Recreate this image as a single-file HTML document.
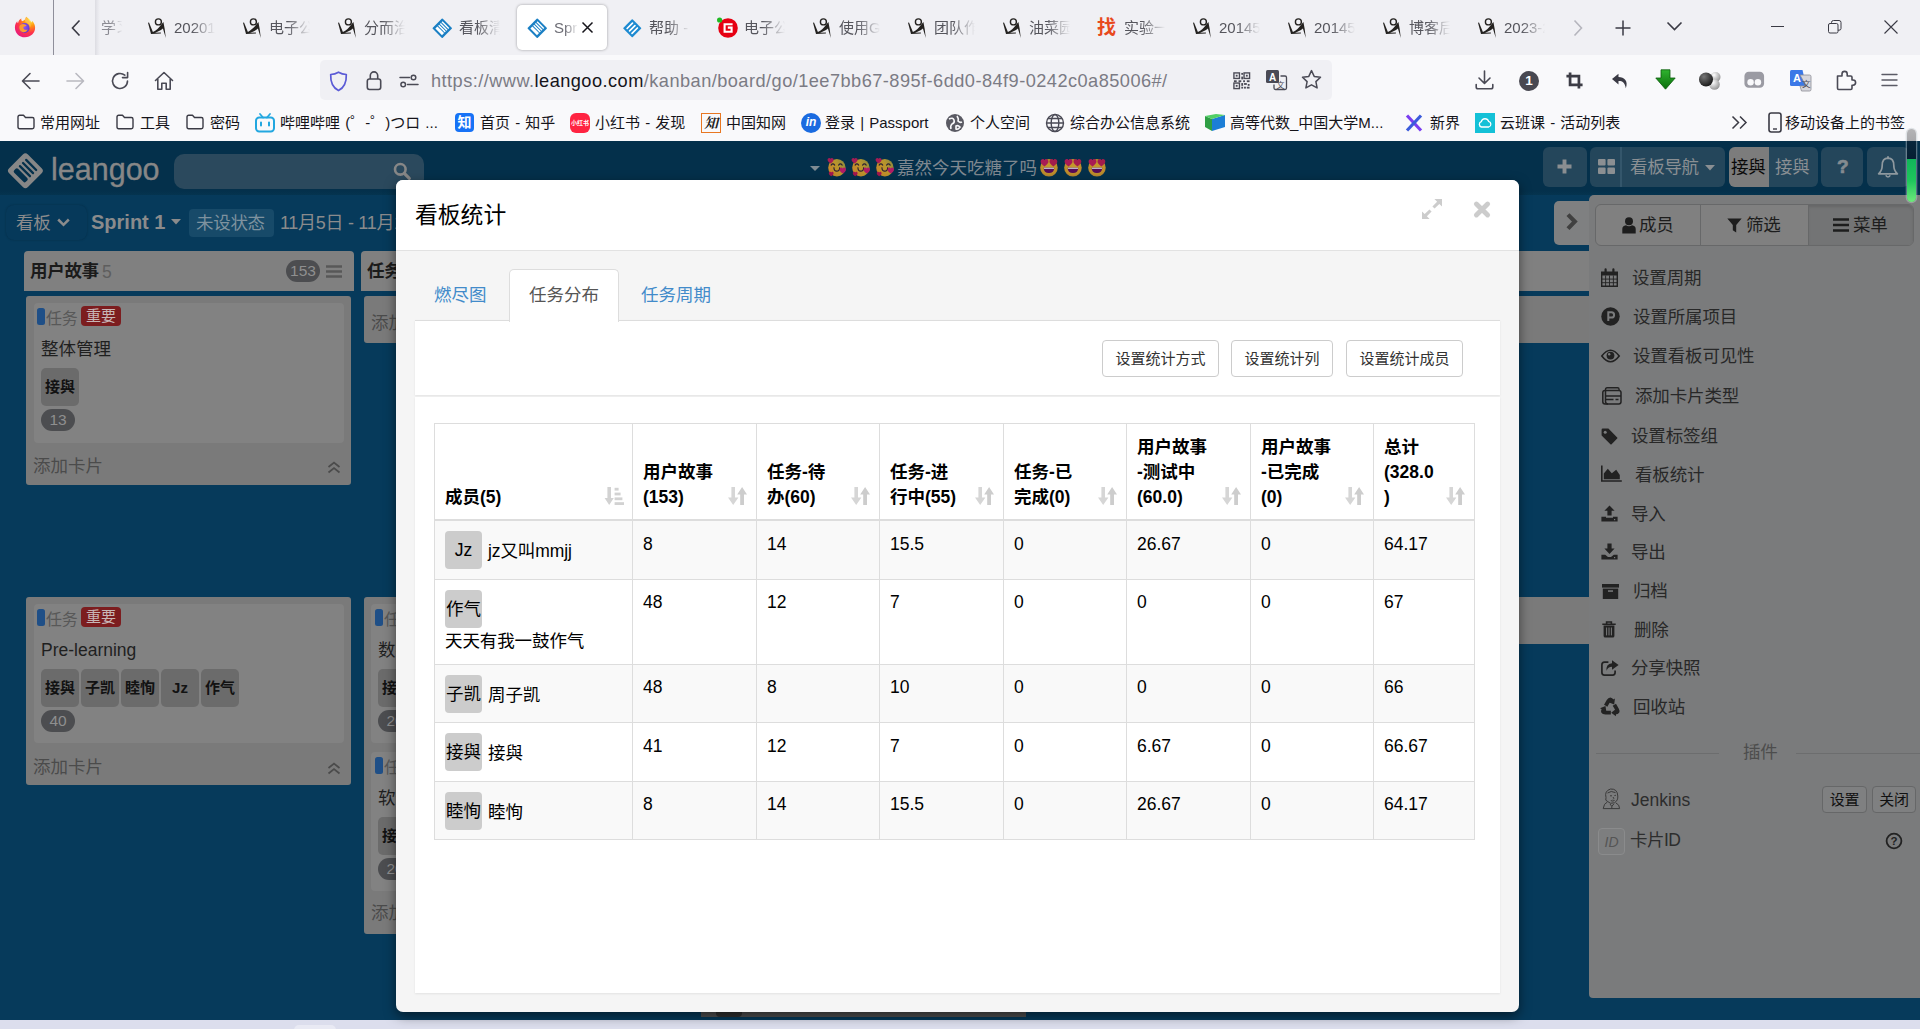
<!DOCTYPE html>
<html lang="zh-CN"><head><meta charset="utf-8"><title>Sprint 1 - Leangoo</title>
<style>
*{box-sizing:border-box}
html,body{margin:0;padding:0}
body{width:1920px;height:1029px;overflow:hidden;position:relative;background:#063a5b;
 font-family:"Liberation Sans","Noto Sans CJK SC",sans-serif;color:#333;}
.abs{position:absolute}
.t{position:absolute;white-space:nowrap;line-height:1}
svg{position:absolute;overflow:visible}
/* browser chrome */
#tabbar{position:absolute;left:0;top:0;width:1920px;height:55px;background:#f0f0f4}
#navbar{position:absolute;left:0;top:55px;width:1920px;height:50px;background:#f9f9fb}
#bmbar{position:absolute;left:0;top:105px;width:1920px;height:36px;background:#f9f9fb}
#urlbar{position:absolute;left:320px;top:60px;width:1012px;height:40px;border-radius:5px;background:#f0f0f4}
.tablabel{position:absolute;top:18px;height:20px;width:42px;overflow:hidden;white-space:nowrap;font-size:15px;line-height:20px;color:#55555c;
 -webkit-mask-image:linear-gradient(90deg,#000 0,#000 42%,transparent 98%);mask-image:linear-gradient(90deg,#000 0,#000 42%,transparent 98%)}
.bm{position:absolute;top:113px;font-size:15px;line-height:20px;height:20px;white-space:nowrap;color:#15141a;word-spacing:1px}

/* page */
#lgnav{position:absolute;left:0;top:141px;width:1920px;height:54px;background:#04304b}
#lgnav:after{content:"";position:absolute;left:0;bottom:0;width:100%;height:4px;background:linear-gradient(#04304b,#05344f)}
.navbtn{position:absolute;top:147px;height:40px;border-radius:6px;background:#24465b}
.g{color:#8a8b8c}
.list-h{position:absolute;height:40px;background:#808080;border-radius:4px 4px 0 0}
.list-b{position:absolute;background:#7a7a7a;border-radius:3px}
.card{position:absolute;background:#828282;border-radius:4px}
.av{position:absolute;width:38px;height:38px;border-radius:5px;background:#6b6b6b;color:#121212;font-size:15px;font-weight:bold;text-align:center;line-height:37px;white-space:nowrap;letter-spacing:0}
.pill{position:absolute;height:22px;border-radius:11px;background:#4c4d50;color:#8f8f8f;font-size:15.5px;line-height:22px;text-align:center}
.lbl{position:absolute;height:20px;border-radius:4px;background:#7c1d1f;color:#c8b6b6;font-size:15px;line-height:20px;text-align:center;width:40px}
.bar{position:absolute;width:8px;height:17px;border-radius:2.5px;background:#1f4f87}
.add{position:absolute;font-size:17.5px;line-height:20px;color:#4b4b4b;white-space:nowrap}
#rp{position:absolute;left:1589px;top:195px;width:331px;height:803px;background:#7a7b7c;border-radius:5px 0 0 4px}
.mi{position:absolute;left:1632px;font-size:17.5px;line-height:22px;color:#282828;white-space:nowrap;letter-spacing:-0.15px;margin-left:-1px}
/* modal */
#modal{position:absolute;left:396px;top:180px;width:1123px;height:832px;background:#f5f5f5;border-radius:7px;box-shadow:0 4px 12px rgba(0,0,0,.5)}
#mhead{position:absolute;left:0;top:0;width:1123px;height:71px;background:#fff;border-radius:7px 7px 0 0;border-bottom:1px solid #e2e2e2}
.tablink{position:absolute;top:284px;font-size:17.5px;line-height:22px;color:#428bca;white-space:nowrap;letter-spacing:0}
.btn{position:absolute;top:340px;height:37px;border:1px solid #ccc;border-radius:4px;background:#fff;font-size:15px;line-height:35px;text-align:center;color:#333;white-space:nowrap;letter-spacing:0}
table#st{position:absolute;left:434px;top:423px;border-collapse:separate;border-spacing:0;table-layout:fixed;font-size:17.5px;color:#000;border-top:1px solid #ddd;border-left:1px solid #ddd;width:1041px}
#st th,#st td{border-right:1px solid #ddd;border-bottom:1px solid #ddd;padding:0;vertical-align:top;text-align:left;position:relative}
#st th{vertical-align:bottom;font-weight:bold;line-height:25px;padding:0 0 9px 10px;border-bottom:2px solid #ddd;letter-spacing:0}
#st td{padding:10px 0 0 10px;line-height:25px}
#st tr.odd td{background:#f9f9f9}
#st tr.p1 td{padding-top:11px}
#st td.m,#st tr.p1 td.m{padding:10px 0 0 10px}
.mav{display:inline-block;width:37px;height:37.5px;border-radius:4px;background:#ccc;color:#000;text-align:center;line-height:39px;font-size:17.5px;vertical-align:top;letter-spacing:0;white-space:nowrap;overflow:hidden}
.mname{display:inline-block;line-height:39px;padding-top:1px;margin-left:2px;letter-spacing:-0.1px;vertical-align:top}
.sort{position:absolute;right:9px;bottom:14px;width:19px;height:18px}

</style></head><body>
<!-- leangoo page -->
<div id="lgnav"></div>
<svg style="left:7px;top:152px" width="37" height="37" viewBox="-18.4 -18.7 37 37"><g transform="rotate(45)"><rect x="-13.3" y="-13.3" width="26.6" height="26.6" rx="3.6" fill="#878787"/><g fill="#04304b"><rect x="-8.2" y="-9.3" width="16.4" height="2.3" rx="1.1"/><rect x="-8.2" y="-4.9" width="16.4" height="2.3" rx="1.1"/><rect x="-8.2" y="-0.5" width="16.4" height="2.3" rx="1.1"/><rect x="-8.2" y="3.9" width="16.4" height="5.4" rx="1.7"/></g></g></svg>
<div class="t" style="left:51px;top:151px;font-size:30.5px;line-height:36px;color:#878787;letter-spacing:0;-webkit-text-stroke:0.35px #878787">leangoo</div>
<div class="abs" style="left:174px;top:154px;width:250px;height:35px;border-radius:10px;background:#2b495d"></div>
<svg style="left:393px;top:162px" width="18" height="18" viewBox="0 0 18 18"><circle cx="7.3" cy="7.3" r="5.3" fill="none" stroke="#878787" stroke-width="2.6"/><path d="M11.3 11.3 L16.3 16.3" stroke="#878787" stroke-width="3.2" stroke-linecap="round"/></svg>
<!-- board title -->
<svg style="left:810px;top:166px" width="10" height="5" viewBox="0 0 10 5"><path d="M0 0 H10 L5 5 Z" fill="#7f8b93"/></svg>
<svg style="left:826px;top:156px" width="22" height="23" viewBox="-2 -2.8 22 23" role="img" aria-label="smiling face with hearts"><defs><linearGradient id="ef1" x1="0" y1="0.7" x2="1" y2="0.2"><stop offset="0" stop-color="#c9872a"/><stop offset="0.55" stop-color="#b9962c"/><stop offset="1" stop-color="#8c8a3e"/></linearGradient></defs><circle cx="8.9" cy="8.9" r="8.7" fill="url(#ef1)"/><path d="M3.1 6.3 Q4.9 3.9 6.7 6.3 M10.6 6.3 Q12.4 3.9 14.2 6.3" fill="none" stroke="#2b2233" stroke-width="1.15" stroke-linecap="round"/><path d="M5.9 8.9 Q6.1 12.3 8.8 12.3 Q11.5 12.3 11.7 8.9" fill="none" stroke="#2b2233" stroke-width="1.15" stroke-linecap="round"/><path d="M2.60 4.78 C0.50 3.22 -0.40 2.14 -0.40 0.94 C-0.40 -0.14 0.38 -0.86 1.28 -0.86 C1.88 -0.86 2.36 -0.50 2.60 0.04 C2.84 -0.50 3.32 -0.86 3.92 -0.86 C4.82 -0.86 5.60 -0.14 5.60 0.94 C5.60 2.14 4.70 3.22 2.60 4.78 Z" fill="#a51c55"/><path d="M14.80 14.67 C12.56 13.01 11.60 11.86 11.60 10.58 C11.60 9.42 12.43 8.66 13.39 8.66 C14.03 8.66 14.54 9.04 14.80 9.62 C15.06 9.04 15.57 8.66 16.21 8.66 C17.17 8.66 18.00 9.42 18.00 10.58 C18.00 11.86 17.04 13.01 14.80 14.67 Z" fill="#b01c66"/><path d="M3.20 17.50 C1.52 16.26 0.80 15.39 0.80 14.43 C0.80 13.57 1.42 12.99 2.14 12.99 C2.62 12.99 3.01 13.28 3.20 13.71 C3.39 13.28 3.78 12.99 4.26 12.99 C4.98 12.99 5.60 13.57 5.60 14.43 C5.60 15.39 4.88 16.26 3.20 17.50 Z" fill="#a3174e"/></svg><svg style="left:850px;top:156px" width="22" height="23" viewBox="-2 -2.8 22 23" role="img" aria-label="smiling face with hearts"><defs><linearGradient id="ef2" x1="0" y1="0.7" x2="1" y2="0.2"><stop offset="0" stop-color="#c9872a"/><stop offset="0.55" stop-color="#b9962c"/><stop offset="1" stop-color="#8c8a3e"/></linearGradient></defs><circle cx="8.9" cy="8.9" r="8.7" fill="url(#ef2)"/><path d="M3.1 6.3 Q4.9 3.9 6.7 6.3 M10.6 6.3 Q12.4 3.9 14.2 6.3" fill="none" stroke="#2b2233" stroke-width="1.15" stroke-linecap="round"/><path d="M5.9 8.9 Q6.1 12.3 8.8 12.3 Q11.5 12.3 11.7 8.9" fill="none" stroke="#2b2233" stroke-width="1.15" stroke-linecap="round"/><path d="M2.60 4.78 C0.50 3.22 -0.40 2.14 -0.40 0.94 C-0.40 -0.14 0.38 -0.86 1.28 -0.86 C1.88 -0.86 2.36 -0.50 2.60 0.04 C2.84 -0.50 3.32 -0.86 3.92 -0.86 C4.82 -0.86 5.60 -0.14 5.60 0.94 C5.60 2.14 4.70 3.22 2.60 4.78 Z" fill="#a51c55"/><path d="M14.80 14.67 C12.56 13.01 11.60 11.86 11.60 10.58 C11.60 9.42 12.43 8.66 13.39 8.66 C14.03 8.66 14.54 9.04 14.80 9.62 C15.06 9.04 15.57 8.66 16.21 8.66 C17.17 8.66 18.00 9.42 18.00 10.58 C18.00 11.86 17.04 13.01 14.80 14.67 Z" fill="#b01c66"/><path d="M3.20 17.50 C1.52 16.26 0.80 15.39 0.80 14.43 C0.80 13.57 1.42 12.99 2.14 12.99 C2.62 12.99 3.01 13.28 3.20 13.71 C3.39 13.28 3.78 12.99 4.26 12.99 C4.98 12.99 5.60 13.57 5.60 14.43 C5.60 15.39 4.88 16.26 3.20 17.50 Z" fill="#a3174e"/></svg><svg style="left:874px;top:156px" width="22" height="23" viewBox="-2 -2.8 22 23" role="img" aria-label="smiling face with hearts"><defs><linearGradient id="ef3" x1="0" y1="0.7" x2="1" y2="0.2"><stop offset="0" stop-color="#c9872a"/><stop offset="0.55" stop-color="#b9962c"/><stop offset="1" stop-color="#8c8a3e"/></linearGradient></defs><circle cx="8.9" cy="8.9" r="8.7" fill="url(#ef3)"/><path d="M3.1 6.3 Q4.9 3.9 6.7 6.3 M10.6 6.3 Q12.4 3.9 14.2 6.3" fill="none" stroke="#2b2233" stroke-width="1.15" stroke-linecap="round"/><path d="M5.9 8.9 Q6.1 12.3 8.8 12.3 Q11.5 12.3 11.7 8.9" fill="none" stroke="#2b2233" stroke-width="1.15" stroke-linecap="round"/><path d="M2.60 4.78 C0.50 3.22 -0.40 2.14 -0.40 0.94 C-0.40 -0.14 0.38 -0.86 1.28 -0.86 C1.88 -0.86 2.36 -0.50 2.60 0.04 C2.84 -0.50 3.32 -0.86 3.92 -0.86 C4.82 -0.86 5.60 -0.14 5.60 0.94 C5.60 2.14 4.70 3.22 2.60 4.78 Z" fill="#a51c55"/><path d="M14.80 14.67 C12.56 13.01 11.60 11.86 11.60 10.58 C11.60 9.42 12.43 8.66 13.39 8.66 C14.03 8.66 14.54 9.04 14.80 9.62 C15.06 9.04 15.57 8.66 16.21 8.66 C17.17 8.66 18.00 9.42 18.00 10.58 C18.00 11.86 17.04 13.01 14.80 14.67 Z" fill="#b01c66"/><path d="M3.20 17.50 C1.52 16.26 0.80 15.39 0.80 14.43 C0.80 13.57 1.42 12.99 2.14 12.99 C2.62 12.99 3.01 13.28 3.20 13.71 C3.39 13.28 3.78 12.99 4.26 12.99 C4.98 12.99 5.60 13.57 5.60 14.43 C5.60 15.39 4.88 16.26 3.20 17.50 Z" fill="#a3174e"/></svg><svg style="left:1039px;top:157px" width="20" height="21" viewBox="-1 -1.8 20 21" role="img" aria-label="smiling face with heart-eyes"><defs><radialGradient id="eg1" cx="0.5" cy="0.45" r="0.6"><stop offset="0" stop-color="#c79a2c"/><stop offset="0.75" stop-color="#bd8d2b"/><stop offset="1" stop-color="#a97a35"/></radialGradient></defs><circle cx="8.95" cy="8.9" r="8.8" fill="url(#eg1)"/><path d="M3.6 8.9 H14.3 Q14.1 14.2 8.95 14.2 Q3.8 14.2 3.6 8.9 Z" fill="#560a58"/><rect x="3.9" y="8.9" width="10.1" height="1.3" fill="#b9b0c8"/><path d="M4.50 7.64 C1.77 5.62 0.60 4.21 0.60 2.65 C0.60 1.25 1.61 0.31 2.78 0.31 C3.56 0.31 4.19 0.78 4.50 1.48 C4.81 0.78 5.44 0.31 6.22 0.31 C7.39 0.31 8.40 1.25 8.40 2.65 C8.40 4.21 7.23 5.62 4.50 7.64 Z" fill="#a81b55"/><path d="M13.40 7.64 C10.67 5.62 9.50 4.21 9.50 2.65 C9.50 1.25 10.51 0.31 11.68 0.31 C12.46 0.31 13.09 0.78 13.40 1.48 C13.71 0.78 14.34 0.31 15.12 0.31 C16.29 0.31 17.30 1.25 17.30 2.65 C17.30 4.21 16.13 5.62 13.40 7.64 Z" fill="#a31c4c"/></svg><svg style="left:1063px;top:157px" width="20" height="21" viewBox="-1 -1.8 20 21" role="img" aria-label="smiling face with heart-eyes"><defs><radialGradient id="eg2" cx="0.5" cy="0.45" r="0.6"><stop offset="0" stop-color="#c79a2c"/><stop offset="0.75" stop-color="#bd8d2b"/><stop offset="1" stop-color="#a97a35"/></radialGradient></defs><circle cx="8.95" cy="8.9" r="8.8" fill="url(#eg2)"/><path d="M3.6 8.9 H14.3 Q14.1 14.2 8.95 14.2 Q3.8 14.2 3.6 8.9 Z" fill="#560a58"/><rect x="3.9" y="8.9" width="10.1" height="1.3" fill="#b9b0c8"/><path d="M4.50 7.64 C1.77 5.62 0.60 4.21 0.60 2.65 C0.60 1.25 1.61 0.31 2.78 0.31 C3.56 0.31 4.19 0.78 4.50 1.48 C4.81 0.78 5.44 0.31 6.22 0.31 C7.39 0.31 8.40 1.25 8.40 2.65 C8.40 4.21 7.23 5.62 4.50 7.64 Z" fill="#a81b55"/><path d="M13.40 7.64 C10.67 5.62 9.50 4.21 9.50 2.65 C9.50 1.25 10.51 0.31 11.68 0.31 C12.46 0.31 13.09 0.78 13.40 1.48 C13.71 0.78 14.34 0.31 15.12 0.31 C16.29 0.31 17.30 1.25 17.30 2.65 C17.30 4.21 16.13 5.62 13.40 7.64 Z" fill="#a31c4c"/></svg><svg style="left:1087px;top:157px" width="20" height="21" viewBox="-1 -1.8 20 21" role="img" aria-label="smiling face with heart-eyes"><defs><radialGradient id="eg3" cx="0.5" cy="0.45" r="0.6"><stop offset="0" stop-color="#c79a2c"/><stop offset="0.75" stop-color="#bd8d2b"/><stop offset="1" stop-color="#a97a35"/></radialGradient></defs><circle cx="8.95" cy="8.9" r="8.8" fill="url(#eg3)"/><path d="M3.6 8.9 H14.3 Q14.1 14.2 8.95 14.2 Q3.8 14.2 3.6 8.9 Z" fill="#560a58"/><rect x="3.9" y="8.9" width="10.1" height="1.3" fill="#b9b0c8"/><path d="M4.50 7.64 C1.77 5.62 0.60 4.21 0.60 2.65 C0.60 1.25 1.61 0.31 2.78 0.31 C3.56 0.31 4.19 0.78 4.50 1.48 C4.81 0.78 5.44 0.31 6.22 0.31 C7.39 0.31 8.40 1.25 8.40 2.65 C8.40 4.21 7.23 5.62 4.50 7.64 Z" fill="#a81b55"/><path d="M13.40 7.64 C10.67 5.62 9.50 4.21 9.50 2.65 C9.50 1.25 10.51 0.31 11.68 0.31 C12.46 0.31 13.09 0.78 13.40 1.48 C13.71 0.78 14.34 0.31 15.12 0.31 C16.29 0.31 17.30 1.25 17.30 2.65 C17.30 4.21 16.13 5.62 13.40 7.64 Z" fill="#a31c4c"/></svg>
<div class="t" id="btitle" style="left:897px;top:157px;font-size:17.5px;line-height:22px;color:#7f8890;letter-spacing:0">嘉然今天吃糖了吗</div>
<!-- top right buttons -->
<div class="navbtn" style="left:1543px;width:44px"></div>
<svg style="left:1557px;top:159px" width="15" height="15" viewBox="0 0 15 15"><path d="M7.5 0.5 V14.5 M0.5 7.5 H14.5" stroke="#8a8e91" stroke-width="3.9"/></svg>
<div class="navbtn" style="left:1590px;width:135px"></div>
<div class="abs" style="left:1620px;top:147px;width:2px;height:40px;background:#34566b"></div>
<svg style="left:1598px;top:159px" width="17" height="15" viewBox="0 0 17 15"><g fill="#8b8f92"><rect x="0" y="0" width="7.6" height="6.6" rx="1"/><rect x="9.4" y="0" width="7.6" height="6.6" rx="1"/><rect x="0" y="8.4" width="7.6" height="6.6" rx="1"/><rect x="9.4" y="8.4" width="7.6" height="6.6" rx="1"/></g></svg>
<div class="t" style="left:1630px;top:156px;font-size:17.5px;line-height:22px;color:#8a8f93;letter-spacing:-0.3px">看板导航</div>
<svg style="left:1705px;top:165px" width="10" height="6" viewBox="0 0 10 6"><path d="M0 0 H10 L5 5.5 Z" fill="#8a8f93"/></svg>
<div class="navbtn" style="left:1729px;width:89px"></div>
<div class="abs" style="left:1729px;top:147px;width:40px;height:40px;border-radius:6px 0 0 6px;background:#7c7c7c"></div>
<div class="t" style="left:1731px;top:156px;font-size:17.5px;line-height:22px;color:#0a0a0a;letter-spacing:-0.3px">接與</div>
<div class="t" style="left:1775px;top:156px;font-size:17.5px;line-height:22px;color:#8a8f93;letter-spacing:-0.3px">接與</div>
<div class="navbtn" style="left:1821px;width:42px"></div>
<div class="t" style="left:1837px;top:156px;font-size:19px;font-weight:bold;line-height:22px;color:#848b90;-webkit-text-stroke:0.7px #848b90">?</div>
<div class="navbtn" style="left:1867px;width:42px"></div>
<svg style="left:1877px;top:156px" width="22" height="24" viewBox="0 0 22 24"><path d="M11 2.2 C6.6 2.2 5.2 6 5.2 9.5 C5.2 14 3.6 16 1.6 17.8 H20.4 C18.4 16 16.8 14 16.8 9.5 C16.8 6 15.4 2.2 11 2.2 Z" fill="none" stroke="#8f999f" stroke-width="1.7" stroke-linejoin="round"/><path d="M8.8 19.3 A2.3 2.3 0 0 0 13.2 19.3" fill="none" stroke="#8f999f" stroke-width="1.5"/><path d="M11 0.8 V2.4" stroke="#8f999f" stroke-width="1.8" stroke-linecap="round"/></svg>
<!-- board header row -->
<div class="abs" style="left:6px;top:205px;width:81px;height:35px;border-radius:8px;background:#06395a;box-shadow:0 0 2px rgba(0,0,0,.25)"></div>
<div class="t g" style="left:16px;top:212px;font-size:17.5px;line-height:22px;letter-spacing:-0.3px">看板</div>
<svg style="left:57px;top:218px" width="13" height="9" viewBox="0 0 13 9"><path d="M1.2 1.5 L6.5 6.8 L11.8 1.5" fill="none" stroke="#8a8b8c" stroke-width="2.5"/></svg>
<div class="t g" style="left:91px;top:210px;font-size:20px;font-weight:bold;line-height:24px">Sprint 1</div>
<svg style="left:171px;top:219px" width="10" height="6" viewBox="0 0 10 6"><path d="M0 0 H10 L5 5.5 Z" fill="#8a8b8c"/></svg>
<div class="abs" style="left:189px;top:209px;width:85px;height:28px;border-radius:4px;background:#174a69"></div>
<div class="t" style="left:196px;top:212px;font-size:17.5px;line-height:22px;color:#7e929f;letter-spacing:-0.3px">未设状态</div>
<div class="t g" style="left:280px;top:212px;font-size:18px;line-height:22px;letter-spacing:-0.3px">11月5日 - 11月15日</div>
<!-- lists -->
<div class="list-h" style="left:24px;top:251px;width:330px"></div>
<div class="t" style="left:30px;top:260px;font-size:17.5px;font-weight:bold;line-height:22px;color:#1b1b1b;letter-spacing:-0.3px">用户故事</div>
<div class="t" style="left:102px;top:261px;font-size:17.5px;line-height:22px;color:#5e5e5e">5</div>
<div class="pill" style="left:286px;top:260px;width:34px">153</div>
<svg style="left:326px;top:265px" width="16" height="13" viewBox="0 0 16 13"><path d="M0 1.5 H16 M0 6.5 H16 M0 11.5 H16" stroke="#585858" stroke-width="2.6"/></svg>
<div class="list-b" style="left:26px;top:296px;width:325px;height:189px"></div>
<div class="card" style="left:34px;top:303px;width:310px;height:140px"></div>
<div class="bar" style="left:37px;top:308px"></div>
<div class="t" style="left:46px;top:308px;font-size:16px;line-height:22px;color:#585858;letter-spacing:-0.3px">任务</div>
<div class="lbl" style="left:81px;top:306px">重要</div>
<div class="t" style="left:41px;top:338px;font-size:17.5px;line-height:22px;color:#1f1f1f;letter-spacing:0">整体管理</div>
<div class="av" style="left:41px;top:368px">接與</div>
<div class="pill" style="left:41px;top:409px;width:34px">13</div>
<div class="add" style="left:33px;top:456px">添加卡片</div>
<svg style="left:327px;top:461px" width="14" height="13" viewBox="0 0 14 13"><path d="M1.5 6 L7 1.5 L12.5 6 M1.5 11.5 L7 7 L12.5 11.5" fill="none" stroke="#4b4b4b" stroke-width="1.7"/></svg>
<!-- list 2 top (mostly hidden) -->
<div class="list-h" style="left:361px;top:251px;width:330px"></div>
<div class="t" style="left:367px;top:260px;font-size:17.5px;font-weight:bold;line-height:22px;color:#1b1b1b;letter-spacing:-0.3px">任务-待办</div>
<div class="list-b" style="left:364px;top:296px;width:325px;height:47px"></div>
<div class="add" style="left:371px;top:313px">添加卡片</div>
<!-- other list headers spanning behind modal -->
<div class="list-h" style="left:698px;top:251px;width:892px;border-radius:4px 0 0 0"></div>
<div class="list-b" style="left:701px;top:296px;width:889px;height:47px;border-radius:3px 0 0 3px"></div>
<!-- row 2 -->
<div class="list-b" style="left:26px;top:597px;width:325px;height:188px"></div>
<div class="card" style="left:34px;top:604px;width:310px;height:139px"></div>
<div class="bar" style="left:37px;top:609px"></div>
<div class="t" style="left:46px;top:609px;font-size:16px;line-height:22px;color:#585858;letter-spacing:-0.3px">任务</div>
<div class="lbl" style="left:81px;top:607px">重要</div>
<div class="t" style="left:41px;top:639px;font-size:17.5px;line-height:22px;color:#1f1f1f">Pre-learning</div>
<div class="av" style="left:41px;top:669px">接與</div>
<div class="av" style="left:81px;top:669px">子凯</div>
<div class="av" style="left:121px;top:669px">睦恂</div>
<div class="av" style="left:161px;top:669px;letter-spacing:0">Jz</div>
<div class="av" style="left:201px;top:669px">作气</div>
<div class="pill" style="left:41px;top:710px;width:34px">40</div>
<div class="add" style="left:33px;top:757px">添加卡片</div>
<svg style="left:327px;top:762px" width="14" height="13" viewBox="0 0 14 13"><path d="M1.5 6 L7 1.5 L12.5 6 M1.5 11.5 L7 7 L12.5 11.5" fill="none" stroke="#4b4b4b" stroke-width="1.7"/></svg>
<!-- list 2 row 2 -->
<div class="list-b" style="left:364px;top:597px;width:325px;height:337px"></div>
<div class="card" style="left:371px;top:604px;width:310px;height:139px"></div>
<div class="bar" style="left:375px;top:609px"></div>
<div class="t" style="left:384px;top:609px;font-size:16px;line-height:22px;color:#585858;letter-spacing:-0.3px">任务</div>
<div class="t" style="left:378px;top:639px;font-size:17.5px;line-height:22px;color:#1f1f1f;letter-spacing:0">数据库设计</div>
<div class="av" style="left:378px;top:669px">接與</div>
<div class="pill" style="left:378px;top:710px;width:34px">20</div>
<div class="card" style="left:371px;top:752px;width:310px;height:139px"></div>
<div class="bar" style="left:375px;top:757px"></div>
<div class="t" style="left:384px;top:757px;font-size:16px;line-height:22px;color:#585858;letter-spacing:-0.3px">任务</div>
<div class="t" style="left:378px;top:787px;font-size:17.5px;line-height:22px;color:#1f1f1f;letter-spacing:0">软件架构设计</div>
<div class="av" style="left:378px;top:817px">接與</div>
<div class="pill" style="left:378px;top:858px;width:34px">20</div>
<div class="add" style="left:371px;top:903px">添加卡片</div>
<div class="list-b" style="left:701px;top:597px;width:889px;height:47px;border-radius:3px 0 0 3px"></div>
<!-- bottom strip -->
<div class="abs" style="left:0;top:1020px;width:1920px;height:9px;background:#dcdeed"></div><div class="abs" style="left:294px;top:1025px;width:42px;height:6px;border-radius:5px 5px 0 0;background:#e9eaf4"></div>
<div class="abs" style="left:701px;top:1012px;width:325px;height:5px;background:#4f4f4f"></div><div class="abs" style="left:716px;top:1012px;width:26px;height:5px;background:#303030;border-radius:0 0 4px 4px"></div>
<!-- right panel -->
<div class="abs" style="left:1554px;top:201px;width:40px;height:44px;border-radius:5px 0 0 5px;background:#7f8081"></div>
<svg style="left:1565px;top:211px" width="14" height="21" viewBox="0 0 14 21"><path d="M3 3.6 L9.8 10.6 L3 17.6" fill="none" stroke="#404040" stroke-width="4.2"/></svg>
<div id="rp"></div>
<div class="abs" style="left:1595px;top:204px;width:319px;height:42px;border:1px solid #676869;border-radius:6px;background:#808080"></div>
<div class="abs" style="left:1808px;top:205px;width:105px;height:40px;border-radius:0 5px 5px 0;background:#737475;box-shadow:inset 0 2px 3px rgba(0,0,0,.12)"></div>
<div class="abs" style="left:1700px;top:205px;width:1px;height:40px;background:#676869"></div>
<div class="abs" style="left:1808px;top:205px;width:1px;height:40px;background:#676869"></div>
<svg style="left:1622px;top:217px" width="14" height="17" viewBox="0 0 14 17"><circle cx="7" cy="4.3" r="4" fill="#1d1d1d"/><path d="M0.3 16.5 V12 Q0.3 8.6 4 8.2 Q7 10.2 10 8.2 Q13.7 8.6 13.7 12 V16.5 Z" fill="#1d1d1d"/></svg>
<div class="t" style="left:1639px;top:214px;font-size:17.5px;line-height:22px;color:#1d1d1d;letter-spacing:-0.3px">成员</div>
<svg style="left:1727px;top:218px" width="15" height="15" viewBox="0 0 15 15"><path d="M0.3 0.5 H14.7 L9.2 7 V14.5 L5.8 12.2 V7 Z" fill="#1d1d1d"/></svg>
<div class="t" style="left:1746px;top:214px;font-size:17.5px;line-height:22px;color:#1d1d1d;letter-spacing:-0.3px">筛选</div>
<svg style="left:1833px;top:218px" width="16" height="14" viewBox="0 0 16 14"><path d="M0 1.5 H16 M0 7 H16 M0 12.5 H16" stroke="#1d1d1d" stroke-width="2.6"/></svg>
<div class="t" style="left:1853px;top:214px;font-size:17.5px;line-height:22px;color:#1d1d1d;letter-spacing:-0.3px">菜单</div>
<!-- menu items -->
<div class="mi" style="left:1633px;top:267px">设置周期</div>
<div class="mi" style="left:1634px;top:306px">设置所属项目</div>
<div class="mi" style="left:1634px;top:345px">设置看板可见性</div>
<div class="mi" style="left:1636px;top:385px">添加卡片类型</div>
<div class="mi" style="left:1632px;top:425px">设置标签组</div>
<div class="mi" style="left:1636px;top:464px">看板统计</div>
<div class="mi" style="left:1632px;top:503px">导入</div>
<div class="mi" style="left:1632px;top:541px">导出</div>
<div class="mi" style="left:1634px;top:580px">归档</div>
<div class="mi" style="left:1635px;top:619px">删除</div>
<div class="mi" style="left:1632px;top:657px">分享快照</div>
<div class="mi" style="left:1634px;top:696px">回收站</div>
<!-- menu icons -->
<svg style="left:1601px;top:269px" width="17" height="18" viewBox="0 0 17 18"><path d="M0.7 3.2 H16.3 V17.3 H0.7 Z" fill="none" stroke="#222" stroke-width="1.4"/><path d="M0.7 3.2 H16.3 V6.5 H0.7 Z" fill="#222"/><path d="M4.6 0.4 V4.4 M12.4 0.4 V4.4" stroke="#222" stroke-width="2.2" stroke-linecap="round"/><path d="M4.6 6.5 V17.3 M8.5 6.5 V17.3 M12.4 6.5 V17.3 M0.7 10.1 H16.3 M0.7 13.7 H16.3" stroke="#222" stroke-width="0.9"/></svg>
<svg style="left:1601px;top:307px" width="19" height="19" viewBox="0 0 19 19"><circle cx="9.5" cy="9.5" r="9.2" fill="#222"/><path d="M7.3 14 V5.3 H10.5 A2.6 2.6 0 0 1 10.5 10.5 H7.3" fill="none" stroke="#7a7b7c" stroke-width="2"/></svg>
<svg style="left:1601px;top:349px" width="19" height="14" viewBox="0 0 19 14"><path d="M0.8 7 Q9.5 -4.4 18.2 7 Q9.5 18.4 0.8 7 Z" fill="none" stroke="#222" stroke-width="1.6"/><circle cx="9.5" cy="6.6" r="3.9" fill="#222"/><circle cx="8.2" cy="5.2" r="1.2" fill="#7a7b7c"/></svg>
<svg style="left:1602px;top:387px" width="20" height="18" viewBox="0 0 20 18"><path d="M3.5 3.2 V2.4 Q3.5 0.8 5.1 0.8 H15.5 Q17.1 0.8 17.1 2.4 V3.4" fill="none" stroke="#222" stroke-width="1.4"/><rect x="0.8" y="3.4" width="18.2" height="13.6" rx="2.2" fill="none" stroke="#222" stroke-width="1.5"/><path d="M3.5 9 H19 M3.8 12.4 H11.5 M13.5 12.4 H16.5" stroke="#222" stroke-width="1.5"/><path d="M3.5 3.4 V14.5 Q3.5 17 6 17" fill="none" stroke="#222" stroke-width="1.5"/></svg>
<svg style="left:1601px;top:428px" width="17" height="17" viewBox="0 0 17 17"><path d="M0.6 1.8 Q0.6 0.6 1.8 0.6 H7.4 L16.2 9.4 Q16.8 10 16.2 10.6 L10.6 16.2 Q10 16.8 9.4 16.2 L0.6 7.4 Z" fill="#222"/><circle cx="4.2" cy="4.2" r="1.5" fill="#7a7b7c"/></svg>
<svg style="left:1601px;top:465px" width="21" height="17" viewBox="0 0 21 17"><path d="M0.8 0.5 V16 H20.8" fill="none" stroke="#222" stroke-width="1.6"/><path d="M2.8 14.2 V8.5 L6.8 3.8 L10.8 8.3 L15.2 4.8 L18.8 10 V14.2 Z" fill="#222"/></svg>
<svg style="left:1601px;top:505px" width="17" height="17" viewBox="0 0 17 17"><path d="M8.5 0.4 L13.6 5.8 H10.6 V10.6 H6.4 V5.8 H3.4 Z" fill="#222"/><path d="M0.4 11.8 H5 V12.8 H12 V11.8 H16.6 V16.6 H0.4 Z" fill="#222"/><rect x="13" y="14" width="1.2" height="1.2" fill="#7a7b7c"/></svg>
<svg style="left:1601px;top:543px" width="17" height="17" viewBox="0 0 17 17"><path d="M8.5 11 L13.6 5.6 H10.6 V0.6 H6.4 V5.6 H3.4 Z" fill="#222"/><path d="M0.4 11.8 H4.2 L7 14 H10 L12.8 11.8 H16.6 V16.6 H0.4 Z" fill="#222"/><rect x="13" y="14" width="1.2" height="1.2" fill="#7a7b7c"/></svg>
<svg style="left:1602px;top:584px" width="17" height="15" viewBox="0 0 17 15"><rect x="0" y="0" width="17" height="3.6" fill="#222"/><path d="M0.8 4.6 H16.2 V15 H0.8 Z" fill="#222"/><rect x="6" y="6.3" width="5" height="1.5" fill="#7a7b7c"/></svg>
<svg style="left:1602px;top:621px" width="14" height="17" viewBox="0 0 14 17"><path d="M0.3 3.2 H13.7 M4.6 3 V1 H9.4 V3" fill="none" stroke="#222" stroke-width="1.6"/><path d="M1.6 4.6 H12.4 V15 Q12.4 16.6 10.8 16.6 H3.2 Q1.6 16.6 1.6 15 Z" fill="#222"/><path d="M4.6 6.5 V14.4 M7 6.5 V14.4 M9.4 6.5 V14.4" stroke="#7a7b7c" stroke-width="1"/></svg>
<svg style="left:1601px;top:660px" width="18" height="16" viewBox="0 0 18 16"><path d="M11 0.2 L17.6 5 L11 9.8 V6.8 Q6.8 6.8 5.6 10.8 Q4.6 4 11 3.2 Z" fill="#222"/><path d="M7.4 2.2 H3.4 Q0.9 2.2 0.9 4.7 V12.6 Q0.9 15.1 3.4 15.1 H11.6 Q14.1 15.1 14.1 12.6 V10.6" fill="none" stroke="#222" stroke-width="1.7"/></svg>
<svg style="left:1601px;top:697px" width="19" height="19" viewBox="-9.3 -10.7 19 19"><g><path d="M-4.6 -2.0 L-1.9 -6.7 Q0 -10 1.9 -6.7" fill="none" stroke="#232323" stroke-width="3.8" stroke-linejoin="round"/><path d="M4.6 -9.2 L-1.7 -5.5 L3.9 -3.3 Z" fill="#232323"/></g><g transform="rotate(120)"><path d="M-4.6 -2.0 L-1.9 -6.7 Q0 -10 1.9 -6.7" fill="none" stroke="#232323" stroke-width="3.8" stroke-linejoin="round"/><path d="M4.6 -9.2 L-1.7 -5.5 L3.9 -3.3 Z" fill="#232323"/></g><g transform="rotate(240)"><path d="M-4.6 -2.0 L-1.9 -6.7 Q0 -10 1.9 -6.7" fill="none" stroke="#232323" stroke-width="3.8" stroke-linejoin="round"/><path d="M4.6 -9.2 L-1.7 -5.5 L3.9 -3.3 Z" fill="#232323"/></g></svg>
<!-- plugins -->
<div class="abs" style="left:1596px;top:753px;width:123px;height:1px;background:#6c6d6e"></div>
<div class="abs" style="left:1796px;top:753px;width:124px;height:1px;background:#6c6d6e"></div>
<div class="t" style="left:1743px;top:741px;font-size:17.5px;line-height:22px;color:#4d4d4d;letter-spacing:-0.3px">插件</div>
<svg style="left:1602px;top:788px" width="19" height="22" viewBox="0 0 19 22"><g fill="none" stroke="#3a3a3a" stroke-width="1"><path d="M4 9.5 Q2.2 3 8.5 1 Q15.5 0.6 15.8 8 Q16.2 12.5 12.5 14.8 Q8 16.5 5.2 13.2 Q3 13 4 9.5 Z"/><path d="M5.5 5 Q9 2.2 13.5 4.6"/><path d="M8 8 Q9 7.2 10 8 M12.4 7.6 Q13.2 7 14 7.6 M11 9 Q12.6 10.6 11 11.4 M8.8 12.6 Q10.8 13.6 12.6 12.4"/><path d="M5.4 14 Q1.8 15.4 1.2 20.6 H17.6 Q17.6 16.6 14 15"/><path d="M8 16 L9.8 18.4 L11.8 16 M9.8 18.4 V20.6"/></g></svg>
<div class="t" style="left:1631px;top:789px;font-size:17.5px;line-height:22px;color:#2d2d2d">Jenkins</div>
<div class="abs" style="left:1822px;top:786px;width:45px;height:27px;border:1px solid #666768;border-radius:4px;background:#7f8081;font-size:15px;line-height:25px;text-align:center;color:#111;letter-spacing:-0.3px">设置</div>
<div class="abs" style="left:1872px;top:786px;width:44px;height:27px;border:1px solid #666768;border-radius:4px;background:#7f8081;font-size:15px;line-height:25px;text-align:center;color:#111;letter-spacing:-0.3px">关闭</div>
<div class="abs" style="left:1598px;top:828px;width:27px;height:27px;border:1px solid #8a8b8c;border-radius:4px;background:#7d7e7f;font-size:14px;font-style:italic;line-height:26px;text-align:center;color:#555">ID</div>
<div class="t" style="left:1630px;top:829px;font-size:17.5px;line-height:22px;color:#2d2d2d;letter-spacing:-0.5px">卡片ID</div>
<svg style="left:1885px;top:832px" width="18" height="18" viewBox="0 0 18 18"><circle cx="9" cy="9" r="7.4" fill="none" stroke="#222" stroke-width="1.8"/><text x="9" y="13" font-size="11.5" font-weight="bold" text-anchor="middle" fill="#222" font-family="Liberation Sans,sans-serif">?</text></svg>
<!-- extension scrollbar widget -->
<div class="abs" style="z-index:9;left:1907px;top:129px;width:9px;height:73px;border-radius:4.5px;background:linear-gradient(#b4b4b6 0,#a9a9ac 12px,#08263b 12px,#061f33 29.5px,#10b65a 30px,#1fc75c 52px,#6fe97c 73px);box-shadow:0 0 0 1.3px rgba(190,200,205,.45)"></div>
<!-- modal -->
<div id="modal"><div id="mhead"></div></div>
<div class="t" style="left:415px;top:201px;font-size:22.8px;line-height:29px;color:#000;letter-spacing:0">看板统计</div>
<svg style="left:1422px;top:199px" width="20" height="20" viewBox="0 0 20 20"><g fill="#ccc"><path d="M12.4 0 H20 V7.6 L17.3 4.9 L12.6 9.6 L10.4 7.4 L15.1 2.7 Z"/><path d="M7.6 20 H0 V12.4 L2.7 15.1 L7.4 10.4 L9.6 12.6 L4.9 17.3 Z"/></g></svg>
<svg style="left:1474px;top:202px" width="16" height="15" viewBox="0 0 16 15"><path d="M2.4 2 L13.6 13 M13.6 2 L2.4 13" stroke="#ccc" stroke-width="4.9" stroke-linecap="round"/></svg>
<!-- tabs -->
<div class="abs" style="left:415px;top:320px;width:1085px;height:75px;background:#fff;box-shadow:0 1px 2px rgba(0,0,0,.08)"></div>
<div class="abs" style="left:415px;top:320px;width:1085px;height:1px;background:#ddd"></div>
<div class="abs" style="left:509px;top:269px;width:110px;height:53px;border:1px solid #ddd;border-bottom:none;border-radius:5px 5px 0 0;background:#fff"></div>
<div class="tablink" style="left:434px">燃尽图</div>
<div class="tablink" style="left:529px;color:#555">任务分布</div>
<div class="tablink" style="left:641px">任务周期</div>
<div class="btn" style="left:1102px;width:117px">设置统计方式</div>
<div class="btn" style="left:1231px;width:102px">设置统计列</div>
<div class="btn" style="left:1346px;width:117px">设置统计成员</div>
<div class="abs" style="left:415px;top:397px;width:1085px;height:596px;background:#fff;box-shadow:0 1px 2px rgba(0,0,0,.08)"></div>
<table id="st">
<colgroup><col style="width:198px"><col style="width:124px"><col style="width:123px"><col style="width:124px"><col style="width:123px"><col style="width:124px"><col style="width:123px"><col style="width:101px"></colgroup>
<tr style="height:97px"><th>成员(5)<svg class="sort" viewBox="0 0 19 18" style="right:8px"><g fill="#d2d2d2"><path d="M2.4 0 H6 V11 H8.8 L4.2 18 L-0.4 11 H2.4 Z"/><rect x="9.6" y="0.8" width="4" height="2.8"/><rect x="9.6" y="5.6" width="6" height="2.8"/><rect x="9.6" y="10.4" width="7.8" height="2.8"/><rect x="9.6" y="15.2" width="9.4" height="2.8"/></g></svg></th>
<th>用户故事<br>(153)<svg class="sort" viewBox="0 0 19 18"><path d="M3.4 0 H7 V10.6 H10.4 L5.2 18 L0 10.6 H3.4 Z" fill="#d6d6d6"/><path d="M12.2 18 H16 V7.4 H19 L14.1 0 L9.2 7.4 H12.2 Z" fill="#cdcdcd"/></svg></th>
<th>任务-待<br>办(60)<svg class="sort" viewBox="0 0 19 18"><path d="M3.4 0 H7 V10.6 H10.4 L5.2 18 L0 10.6 H3.4 Z" fill="#d6d6d6"/><path d="M12.2 18 H16 V7.4 H19 L14.1 0 L9.2 7.4 H12.2 Z" fill="#cdcdcd"/></svg></th>
<th>任务-进<br>行中(55)<svg class="sort" viewBox="0 0 19 18"><path d="M3.4 0 H7 V10.6 H10.4 L5.2 18 L0 10.6 H3.4 Z" fill="#d6d6d6"/><path d="M12.2 18 H16 V7.4 H19 L14.1 0 L9.2 7.4 H12.2 Z" fill="#cdcdcd"/></svg></th>
<th>任务-已<br>完成(0)<svg class="sort" viewBox="0 0 19 18"><path d="M3.4 0 H7 V10.6 H10.4 L5.2 18 L0 10.6 H3.4 Z" fill="#d6d6d6"/><path d="M12.2 18 H16 V7.4 H19 L14.1 0 L9.2 7.4 H12.2 Z" fill="#cdcdcd"/></svg></th>
<th>用户故事<br>-测试中<br>(60.0)<svg class="sort" viewBox="0 0 19 18"><path d="M3.4 0 H7 V10.6 H10.4 L5.2 18 L0 10.6 H3.4 Z" fill="#d6d6d6"/><path d="M12.2 18 H16 V7.4 H19 L14.1 0 L9.2 7.4 H12.2 Z" fill="#cdcdcd"/></svg></th>
<th>用户故事<br>-已完成<br>(0)<svg class="sort" viewBox="0 0 19 18"><path d="M3.4 0 H7 V10.6 H10.4 L5.2 18 L0 10.6 H3.4 Z" fill="#d6d6d6"/><path d="M12.2 18 H16 V7.4 H19 L14.1 0 L9.2 7.4 H12.2 Z" fill="#cdcdcd"/></svg></th>
<th>总计<br>(328.0<br>)<svg class="sort" viewBox="0 0 19 18"><path d="M3.4 0 H7 V10.6 H10.4 L5.2 18 L0 10.6 H3.4 Z" fill="#d6d6d6"/><path d="M12.2 18 H16 V7.4 H19 L14.1 0 L9.2 7.4 H12.2 Z" fill="#cdcdcd"/></svg></th></tr>
<tr class="odd p1" style="height:59px"><td class="m"><span class="mav">Jz</span><span class="mname" style="margin-left:6px">jz又叫mmjj</span></td><td>8</td><td>14</td><td>15.5</td><td>0</td><td>26.67</td><td>0</td><td>64.17</td></tr>
<tr style="height:85px"><td class="m"><span class="mav">作气</span><br><span class="mname" style="margin-left:0;line-height:25px;padding-top:1px">天天有我一鼓作气</span></td><td>48</td><td>12</td><td>7</td><td>0</td><td>0</td><td>0</td><td>67</td></tr>
<tr class="odd" style="height:58px"><td class="m"><span class="mav">子凯</span><span class="mname" style="margin-left:6px">周子凯</span></td><td>48</td><td>8</td><td>10</td><td>0</td><td>0</td><td>0</td><td>66</td></tr>
<tr class="p1" style="height:59px"><td class="m"><span class="mav">接與</span><span class="mname" style="margin-left:6px">接與</span></td><td>41</td><td>12</td><td>7</td><td>0</td><td>6.67</td><td>0</td><td>66.67</td></tr>
<tr class="odd" style="height:58px"><td class="m"><span class="mav">睦恂</span><span class="mname" style="margin-left:6px">睦恂</span></td><td>8</td><td>14</td><td>15.5</td><td>0</td><td>26.67</td><td>0</td><td>64.17</td></tr>
</table>

<div id="tabbar"></div><div id="navbar"></div><div id="bmbar"></div>
<svg style="left:14px;top:16px" width="22" height="22" viewBox="0 0 22 22"><defs><radialGradient id="ffg" cx="0.75" cy="0.15" r="1"><stop offset="0" stop-color="#fff44f"/><stop offset="0.3" stop-color="#ff980e"/><stop offset="0.62" stop-color="#ff3647"/><stop offset="1" stop-color="#e31587"/></radialGradient><radialGradient id="ffp" cx="0.45" cy="0.4" r="0.7"><stop offset="0" stop-color="#9059ff"/><stop offset="1" stop-color="#5b2fc4"/></radialGradient></defs><path d="M11 21.3 C5 21.3 0.9 16.8 0.9 11.4 C0.9 8.6 2 6.6 3.2 5.2 C3.2 6.2 3.6 6.9 4 7.3 C4.4 5 5.6 3.6 7.4 2.6 C7.1 3.6 7.4 4.6 8 5.2 C9.6 5 11.6 3.8 12.2 0.8 C15 2.6 16.6 4.6 17.4 6.6 C17.8 6.2 18 5.4 18 4.8 C20 6.8 21.1 9.2 21.1 11.8 C21.1 17 16.8 21.3 11 21.3 Z" fill="url(#ffg)"/><circle cx="10.6" cy="12" r="5" fill="url(#ffp)"/><path d="M5.4 10.2 C6.6 7.8 9.4 7.4 11.6 8.8 C13 9.6 12.6 10.2 11.4 10.2 C9.8 10.2 9 11.2 9.6 12.6 C10.2 14 12.4 14.2 13.6 13.2 C13 15.6 10.6 16.8 8.4 16 C6 15.2 4.8 12.6 5.4 10.2 Z" fill="#ff9a2e"/><path d="M12.2 0.8 C12.6 3 14.8 4.2 16 6.6 C17 8.6 16.6 10.6 15.8 11.8 C16 9.4 14.8 7.6 13 6.6 C11.8 6 11 5.4 11 4.2 C11 3 11.6 1.8 12.2 0.8 Z" fill="#ffbd4f"/></svg>
<div class="abs" style="left:53px;top:0;width:1px;height:55px;background:#8f8f9a"></div>
<div class="abs" style="left:95px;top:0;width:5px;height:55px;background:linear-gradient(90deg,#dcdce2,#e9e9ee 60%,#f0f0f4)"></div>
<svg style="left:70px;top:18px" width="12" height="20" viewBox="0 0 12 20"><path d="M9.5 2.5 L2.5 10 L9.5 17.5" fill="none" stroke="#3a3a44" stroke-width="1.6"/></svg>
<div class="tablabel" style="left:101px;width:22px;color:#8a8a92">学习</div>
<svg style="left:148px;top:17px" width="19" height="22" viewBox="0 0 19 22"><circle cx="10.4" cy="4.9" r="3.0" fill="none" stroke="#242220" stroke-width="1.4"/><path d="M0 5.8 L1 5.4 L4.9 14.9 C8 13.4 11.2 10.6 13.3 7.4 L15.4 4.9 L16.7 12 L17.8 20.9 L14.9 11.6 C12.5 13.6 9.5 15.2 7 15.7 L12.9 15.5 L12.9 16.6 L3.0 16.9 Z" fill="#242220"/></svg>
<div class="tablabel" style="left:174px">2020118</div>
<svg style="left:243px;top:17px" width="19" height="22" viewBox="0 0 19 22"><circle cx="10.4" cy="4.9" r="3.0" fill="none" stroke="#242220" stroke-width="1.4"/><path d="M0 5.8 L1 5.4 L4.9 14.9 C8 13.4 11.2 10.6 13.3 7.4 L15.4 4.9 L16.7 12 L17.8 20.9 L14.9 11.6 C12.5 13.6 9.5 15.2 7 15.7 L12.9 15.5 L12.9 16.6 L3.0 16.9 Z" fill="#242220"/></svg>
<div class="tablabel" style="left:269px">电子公文</div>
<svg style="left:338px;top:17px" width="19" height="22" viewBox="0 0 19 22"><circle cx="10.4" cy="4.9" r="3.0" fill="none" stroke="#242220" stroke-width="1.4"/><path d="M0 5.8 L1 5.4 L4.9 14.9 C8 13.4 11.2 10.6 13.3 7.4 L15.4 4.9 L16.7 12 L17.8 20.9 L14.9 11.6 C12.5 13.6 9.5 15.2 7 15.7 L12.9 15.5 L12.9 16.6 L3.0 16.9 Z" fill="#242220"/></svg>
<div class="tablabel" style="left:364px">分而治之</div>
<svg style="left:431.75px;top:17.5px" width="20.5" height="20.5" viewBox="-10.25 -10.25 20.5 20.5"><g transform="rotate(45)"><rect x="-7.1" y="-7.1" width="14.2" height="14.2" rx="0.8" fill="#1a7fc4"/><g fill="#fff"><rect x="-4.7" y="-5.2" width="9.4" height="1.45"/><rect x="-4.7" y="-2.75" width="9.4" height="1.45"/><rect x="-4.7" y="-0.3" width="9.4" height="1.45"/><rect x="-4.7" y="2.15" width="9.4" height="2.9"/></g></g></svg>
<div class="tablabel" style="left:459px">看板清单</div>
<div class="abs" style="left:517px;top:5px;width:90px;height:45px;border-radius:5px;background:#fff;box-shadow:0 0 3px rgba(0,0,0,.35)"></div>
<svg style="left:526.75px;top:17.5px" width="20.5" height="20.5" viewBox="-10.25 -10.25 20.5 20.5"><g transform="rotate(45)"><rect x="-7.1" y="-7.1" width="14.2" height="14.2" rx="0.8" fill="#1a7fc4"/><g fill="#fff"><rect x="-4.7" y="-5.2" width="9.4" height="1.45"/><rect x="-4.7" y="-2.75" width="9.4" height="1.45"/><rect x="-4.7" y="-0.3" width="9.4" height="1.45"/><rect x="-4.7" y="2.15" width="9.4" height="2.9"/></g></g></svg>
<div class="tablabel" style="left:554px;width:25px;color:#6d6d75">Spr</div>
<svg style="left:581px;top:21px" width="13" height="13" viewBox="0 0 13 13"><path d="M1.5 1.5 L11.5 11.5 M11.5 1.5 L1.5 11.5" stroke="#15141a" stroke-width="1.5" fill="none"/></svg>
<svg style="left:621.75px;top:17.5px" width="20.5" height="20.5" viewBox="-10.25 -10.25 20.5 20.5"><g transform="rotate(-45)"><rect x="-6.6" y="-6.6" width="13.2" height="13.2" rx="0.8" fill="#1c8ad1"/><g fill="#fff"><rect x="-4.6" y="-4.3" width="9.2" height="1.7" rx="0.8"/><rect x="-4.6" y="-0.85" width="9.2" height="1.7" rx="0.8"/><rect x="-4.6" y="2.6" width="9.2" height="1.7" rx="0.8"/></g></g></svg>
<div class="tablabel" style="left:649px">帮助 - L</div>
<svg style="left:716px;top:16px" width="22" height="22" viewBox="0 0 22 22"><circle cx="12" cy="12" r="9.8" fill="#e60012"/><path d="M16.6 8.3 H8.6 V15.8 H15.6 V11.6 H11.8" fill="none" stroke="#fff" stroke-width="2.1"/><circle cx="3.6" cy="4" r="2.6" fill="#1fb922"/></svg>
<div class="tablabel" style="left:744px">电子公文</div>
<svg style="left:813px;top:17px" width="19" height="22" viewBox="0 0 19 22"><circle cx="10.4" cy="4.9" r="3.0" fill="none" stroke="#242220" stroke-width="1.4"/><path d="M0 5.8 L1 5.4 L4.9 14.9 C8 13.4 11.2 10.6 13.3 7.4 L15.4 4.9 L16.7 12 L17.8 20.9 L14.9 11.6 C12.5 13.6 9.5 15.2 7 15.7 L12.9 15.5 L12.9 16.6 L3.0 16.9 Z" fill="#242220"/></svg>
<div class="tablabel" style="left:839px">使用Git</div>
<svg style="left:908px;top:17px" width="19" height="22" viewBox="0 0 19 22"><circle cx="10.4" cy="4.9" r="3.0" fill="none" stroke="#242220" stroke-width="1.4"/><path d="M0 5.8 L1 5.4 L4.9 14.9 C8 13.4 11.2 10.6 13.3 7.4 L15.4 4.9 L16.7 12 L17.8 20.9 L14.9 11.6 C12.5 13.6 9.5 15.2 7 15.7 L12.9 15.5 L12.9 16.6 L3.0 16.9 Z" fill="#242220"/></svg>
<div class="tablabel" style="left:934px">团队作业</div>
<svg style="left:1003px;top:17px" width="19" height="22" viewBox="0 0 19 22"><circle cx="10.4" cy="4.9" r="3.0" fill="none" stroke="#242220" stroke-width="1.4"/><path d="M0 5.8 L1 5.4 L4.9 14.9 C8 13.4 11.2 10.6 13.3 7.4 L15.4 4.9 L16.7 12 L17.8 20.9 L14.9 11.6 C12.5 13.6 9.5 15.2 7 15.7 L12.9 15.5 L12.9 16.6 L3.0 16.9 Z" fill="#242220"/></svg>
<div class="tablabel" style="left:1029px">油菜园</div>
<div class="t" style="left:1097px;top:17px;font-size:19px;font-weight:bold;color:#e8491d;line-height:21px">找</div>
<div class="tablabel" style="left:1124px">实验一</div>
<svg style="left:1193px;top:17px" width="19" height="22" viewBox="0 0 19 22"><circle cx="10.4" cy="4.9" r="3.0" fill="none" stroke="#242220" stroke-width="1.4"/><path d="M0 5.8 L1 5.4 L4.9 14.9 C8 13.4 11.2 10.6 13.3 7.4 L15.4 4.9 L16.7 12 L17.8 20.9 L14.9 11.6 C12.5 13.6 9.5 15.2 7 15.7 L12.9 15.5 L12.9 16.6 L3.0 16.9 Z" fill="#242220"/></svg>
<div class="tablabel" style="left:1219px">20145</div>
<svg style="left:1288px;top:17px" width="19" height="22" viewBox="0 0 19 22"><circle cx="10.4" cy="4.9" r="3.0" fill="none" stroke="#242220" stroke-width="1.4"/><path d="M0 5.8 L1 5.4 L4.9 14.9 C8 13.4 11.2 10.6 13.3 7.4 L15.4 4.9 L16.7 12 L17.8 20.9 L14.9 11.6 C12.5 13.6 9.5 15.2 7 15.7 L12.9 15.5 L12.9 16.6 L3.0 16.9 Z" fill="#242220"/></svg>
<div class="tablabel" style="left:1314px">20145</div>
<svg style="left:1383px;top:17px" width="19" height="22" viewBox="0 0 19 22"><circle cx="10.4" cy="4.9" r="3.0" fill="none" stroke="#242220" stroke-width="1.4"/><path d="M0 5.8 L1 5.4 L4.9 14.9 C8 13.4 11.2 10.6 13.3 7.4 L15.4 4.9 L16.7 12 L17.8 20.9 L14.9 11.6 C12.5 13.6 9.5 15.2 7 15.7 L12.9 15.5 L12.9 16.6 L3.0 16.9 Z" fill="#242220"/></svg>
<div class="tablabel" style="left:1409px">博客后台</div>
<svg style="left:1478px;top:17px" width="19" height="22" viewBox="0 0 19 22"><circle cx="10.4" cy="4.9" r="3.0" fill="none" stroke="#242220" stroke-width="1.4"/><path d="M0 5.8 L1 5.4 L4.9 14.9 C8 13.4 11.2 10.6 13.3 7.4 L15.4 4.9 L16.7 12 L17.8 20.9 L14.9 11.6 C12.5 13.6 9.5 15.2 7 15.7 L12.9 15.5 L12.9 16.6 L3.0 16.9 Z" fill="#242220"/></svg>
<div class="tablabel" style="left:1504px">2023-2</div>
<svg style="left:1572px;top:18px" width="12" height="20" viewBox="0 0 12 20"><path d="M2.5 2.5 L9.5 10 L2.5 17.5" fill="none" stroke="#b5b5bd" stroke-width="1.6"/></svg>
<svg style="left:1615px;top:20px" width="16" height="16" viewBox="0 0 16 16"><path d="M8 0.5 V15.5 M0.5 8 H15.5" stroke="#3a3a44" stroke-width="1.5"/></svg>
<svg style="left:1666px;top:21px" width="17" height="11" viewBox="0 0 17 11"><path d="M1.5 1.5 L8.5 8.5 L15.5 1.5" fill="none" stroke="#3a3a44" stroke-width="1.6"/></svg>
<div class="abs" style="left:1771px;top:26px;width:13px;height:1px;background:#3a3a44"></div>
<svg style="left:1828px;top:20px" width="14" height="14" viewBox="0 0 14 14"><rect x="0.5" y="3.5" width="9.5" height="9.5" rx="1.5" fill="none" stroke="#3a3a44" stroke-width="1"/><path d="M3.5 3.5 V2.5 Q3.5 0.5 5.5 0.5 H11 Q13 0.5 13 2.5 V8.5 Q13 10.2 11 10.2 H10" fill="none" stroke="#3a3a44" stroke-width="1"/></svg>
<svg style="left:1884px;top:20px" width="14" height="14" viewBox="0 0 14 14"><path d="M0.5 0.5 L13.5 13.5 M13.5 0.5 L0.5 13.5" stroke="#3a3a44" stroke-width="1.1" fill="none"/></svg>
<div id="urlbar"></div>
<svg style="left:21px;top:72px" width="19" height="18" viewBox="0 0 19 18"><path d="M18 9 H2 M9 1.5 L1.5 9 L9 16.5" fill="none" stroke="#4a4a55" stroke-width="1.6" stroke-linecap="round" stroke-linejoin="round"/></svg>
<svg style="left:66px;top:72px" width="19" height="18" viewBox="0 0 19 18"><path d="M1 9 H17 M10 1.5 L17.5 9 L10 16.5" fill="none" stroke="#b9b9c0" stroke-width="1.6" stroke-linecap="round" stroke-linejoin="round"/></svg>
<svg style="left:110px;top:71px" width="20" height="20" viewBox="0 0 20 20"><path d="M17.5 10 A7.5 7.5 0 1 1 14.8 4.2" fill="none" stroke="#4a4a55" stroke-width="1.6" stroke-linecap="round"/><path d="M17.6 1.5 V6.6 H12.5" fill="none" stroke="#4a4a55" stroke-width="1.6" stroke-linecap="round" stroke-linejoin="round"/></svg>
<svg style="left:154px;top:71px" width="20" height="20" viewBox="0 0 20 20"><path d="M1.5 9.5 L10 1.5 L18.5 9.5 M3.8 8 V18.2 H7.8 V12.2 H12.2 V18.2 H16.2 V8" fill="none" stroke="#4a4a55" stroke-width="1.6" stroke-linecap="round" stroke-linejoin="round"/></svg>
<svg style="left:329px;top:71px" width="19" height="21" viewBox="0 0 19 21"><path d="M9.5 1.2 C12 2.6 14.5 3.3 17.3 3.5 C17.6 10.5 15.5 16.5 9.5 19.6 C3.5 16.5 1.4 10.5 1.7 3.5 C4.5 3.3 7 2.6 9.5 1.2 Z" fill="none" stroke="#5b5bd6" stroke-width="1.7" stroke-linejoin="round"/></svg>
<svg style="left:366px;top:70px" width="16" height="21" viewBox="0 0 16 21"><rect x="1.3" y="9" width="13.4" height="10.5" rx="2.2" fill="none" stroke="#4a4a55" stroke-width="1.6"/><path d="M4.3 9 V5.6 A3.7 3.7 0 0 1 11.7 5.6 V9" fill="none" stroke="#4a4a55" stroke-width="1.6"/></svg>
<svg style="left:399px;top:74px" width="20" height="14" viewBox="0 0 20 14"><path d="M1 3.5 H10.5 M8.5 10.5 H19" stroke="#4a4a55" stroke-width="1.5" stroke-linecap="round"/><circle cx="14.5" cy="3.5" r="2.3" fill="none" stroke="#4a4a55" stroke-width="1.5"/><circle cx="4.2" cy="10.5" r="2.3" fill="none" stroke="#4a4a55" stroke-width="1.5"/></svg>
<div class="t" id="url" style="left:431px;top:70px;font-size:18.2px;line-height:22px;color:#7b7b84;letter-spacing:0.46px">https://www.<span style="color:#15141a">leangoo.com</span>/kanban/board/go/1ee7bb67-895f-6dd0-84f9-0242c0a85006#/</div>
<svg style="left:1233px;top:72px" width="17.5" height="17.5" viewBox="0 0 19 19"><g fill="none" stroke="#4a4a55" stroke-width="1.5"><rect x="1" y="1" width="6" height="6"/><rect x="12" y="1" width="6" height="6"/><rect x="1" y="12" width="6" height="6"/></g><g fill="#4a4a55"><rect x="3" y="3" width="2" height="2"/><rect x="14" y="3" width="2" height="2"/><rect x="3" y="14" width="2" height="2"/><rect x="9" y="1" width="2" height="2"/><rect x="9" y="5" width="2" height="3"/><rect x="1" y="9" width="3" height="2"/><rect x="6" y="9" width="3" height="2"/><rect x="11" y="9" width="2" height="2"/><rect x="15" y="9" width="3" height="2"/><rect x="9" y="12" width="2" height="3"/><rect x="12" y="12" width="3" height="2"/><rect x="16" y="13" width="2" height="2"/><rect x="12" y="16" width="2" height="2"/><rect x="15" y="16" width="3" height="2"/><rect x="9" y="16" width="2" height="2"/></g></svg>
<svg style="left:1265px;top:69px" width="23" height="22" viewBox="0 0 23 22"><rect x="1" y="1" width="13" height="13" rx="1.5" fill="#4a4a55"/><text x="7.5" y="11.5" font-size="10" font-weight="bold" text-anchor="middle" fill="#fff" font-family="Liberation Sans,sans-serif">A</text><path d="M15.5 7 H20 Q21.5 7 21.5 8.5 V19 Q21.5 20.5 20 20.5 H10.5 Q9 20.5 9 19 V15.5" fill="none" stroke="#4a4a55" stroke-width="1.3"/><text x="15.5" y="18.5" font-size="8" text-anchor="middle" fill="#4a4a55" font-family="Noto Sans CJK SC,sans-serif">文</text></svg>
<svg style="left:1301px;top:69px" width="21" height="21" viewBox="0 0 21 21"><path d="M10.5 1.6 L13.2 7.4 L19.5 8.2 L14.9 12.6 L16.1 18.9 L10.5 15.8 L4.9 18.9 L6.1 12.6 L1.5 8.2 L7.8 7.4 Z" fill="none" stroke="#4a4a55" stroke-width="1.5" stroke-linejoin="round"/></svg>
<svg style="left:1475px;top:70px" width="19" height="20" viewBox="0 0 19 20"><path d="M9.5 1 V13 M4 8 L9.5 13.5 L15 8 M1.2 14.5 V17 Q1.2 18.8 3 18.8 H16 Q17.8 18.8 17.8 17 V14.5" fill="none" stroke="#4a4a55" stroke-width="1.6" stroke-linecap="round" stroke-linejoin="round"/></svg>
<div class="abs" style="left:1519px;top:71px;width:20px;height:20px;border-radius:50%;background:#484851;color:#fff;font-size:13.5px;font-weight:bold;text-align:center;line-height:20px">1</div>
<svg style="left:1566px;top:72px" width="17" height="17" viewBox="0 0 20 20"><path d="M4.8 0.5 V15.2 H19.5 M0.5 4.8 H15.2 V19.5" fill="none" stroke="#3d3d46" stroke-width="3.2"/></svg>
<svg style="left:1611px;top:73px" width="17.5" height="16" viewBox="0 0 20 19"><path d="M8.5 0.8 L0.8 7.2 L8.5 13.6 V9.6 C13 9.4 16 11.5 17.2 18 C20.5 9.5 15.5 4.8 8.5 4.7 Z" fill="#3a3a44"/></svg>
<svg style="left:1655px;top:69px" width="21" height="21" viewBox="0 0 21 21"><defs><linearGradient id="gg" x1="0" y1="0" x2="0" y2="1"><stop offset="0" stop-color="#2fb42f"/><stop offset="1" stop-color="#0b6d0b"/></linearGradient></defs><path d="M6 0.8 H15 V9 H20.2 L10.5 20.2 L0.8 9 H6 Z" fill="url(#gg)" stroke="#0a5a0a" stroke-width="0.8"/></svg>
<svg style="left:1698px;top:69px" width="24" height="22" viewBox="0 0 24 22"><defs><radialGradient id="b1" cx="0.35" cy="0.3" r="0.8"><stop offset="0" stop-color="#777"/><stop offset="1" stop-color="#111"/></radialGradient><radialGradient id="b2" cx="0.35" cy="0.3" r="0.8"><stop offset="0" stop-color="#fff"/><stop offset="1" stop-color="#8a8a8a"/></radialGradient></defs><circle cx="17.5" cy="8" r="5" fill="url(#b2)"/><circle cx="16.5" cy="15.5" r="5.3" fill="url(#b2)"/><circle cx="8" cy="10.5" r="7" fill="url(#b1)"/></svg>
<svg style="left:1744px;top:70px" width="20.5" height="19.5" viewBox="0 0 24 20"><rect x="0.5" y="0.5" width="23" height="19" rx="5" fill="#9b9ba3"/><circle cx="7.7" cy="13" r="3.8" fill="#f9f9fb"/><circle cx="16.3" cy="13" r="3.8" fill="#f9f9fb"/></svg>
<svg style="left:1789px;top:69px" width="23" height="23" viewBox="0 0 23 23"><path d="M1 2.5 Q1 1 2.5 1 H13.5 L17 17 H2.5 Q1 17 1 15.5 Z" fill="#3b78e7"/><text x="8" y="13" font-size="11" font-weight="bold" text-anchor="middle" fill="#fff" font-family="Liberation Sans,sans-serif">A</text><path d="M11 6 H20.5 Q22 6 22 7.5 V20.5 Q22 22 20.5 22 H12.5 L11 17 H17 Z" fill="#d6d6dc" stroke="#8d8d96" stroke-width="0.8"/><text x="17.2" y="17.5" font-size="8.5" text-anchor="middle" fill="#4a4a55" font-family="Noto Sans CJK SC,sans-serif">文</text></svg>
<svg style="left:1835px;top:69px" width="21" height="22" viewBox="0 0 21 22"><path d="M2.5 7 H7 V5 A2.6 2.6 0 0 1 12.2 5 V7 H15.8 Q17 7 17 8.2 V11 H18 A2.6 2.6 0 0 1 18 16.2 H17 V19.3 Q17 20.5 15.8 20.5 H3.7 Q2.5 20.5 2.5 19.3 Z" fill="none" stroke="#4a4a55" stroke-width="1.6" stroke-linejoin="round"/></svg>
<svg style="left:1881px;top:73px" width="17" height="14" viewBox="0 0 17 14"><path d="M1 1.5 H16 M1 7 H16 M1 12.5 H16" stroke="#5b5b66" stroke-width="1.4" stroke-linecap="round"/></svg>
<svg style="left:17px;top:114px" width="18" height="16" viewBox="0 0 18 16"><path d="M1 3 Q1 1.3 2.7 1.3 H6.5 L8.5 3.5 H15.3 Q17 3.5 17 5.2 V13 Q17 14.7 15.3 14.7 H2.7 Q1 14.7 1 13 Z" fill="none" stroke="#3a3a44" stroke-width="1.4" stroke-linejoin="round"/></svg>
<div class="bm" style="left:40px">常用网址</div>
<svg style="left:116px;top:114px" width="18" height="16" viewBox="0 0 18 16"><path d="M1 3 Q1 1.3 2.7 1.3 H6.5 L8.5 3.5 H15.3 Q17 3.5 17 5.2 V13 Q17 14.7 15.3 14.7 H2.7 Q1 14.7 1 13 Z" fill="none" stroke="#3a3a44" stroke-width="1.4" stroke-linejoin="round"/></svg>
<div class="bm" style="left:140px">工具</div>
<svg style="left:186px;top:114px" width="18" height="16" viewBox="0 0 18 16"><path d="M1 3 Q1 1.3 2.7 1.3 H6.5 L8.5 3.5 H15.3 Q17 3.5 17 5.2 V13 Q17 14.7 15.3 14.7 H2.7 Q1 14.7 1 13 Z" fill="none" stroke="#3a3a44" stroke-width="1.4" stroke-linejoin="round"/></svg>
<div class="bm" style="left:210px">密码</div>
<svg style="left:254px;top:112px" width="22" height="22" viewBox="0 0 22 22"><path d="M6 2 L9 5.5 M16 2 L13 5.5" stroke="#22a7e0" stroke-width="1.8" stroke-linecap="round"/><rect x="2" y="5.5" width="18" height="14" rx="3.2" fill="none" stroke="#22a7e0" stroke-width="2"/><path d="M7 10.5 V13.5 M15 10.5 V13.5" stroke="#22a7e0" stroke-width="2" stroke-linecap="round"/></svg>
<div class="bm" style="left:280px">哔哩哔哩 (゜-゜)つロ ...</div>
<div class="abs" style="left:455px;top:113px;width:19px;height:19px;border-radius:4px;background:#1772f6;color:#fff;font-size:14px;font-weight:bold;line-height:19px;text-align:center">知</div>
<div class="bm" style="left:480px">首页 - 知乎</div>
<div class="abs" style="left:570px;top:113px;width:20px;height:20px;border-radius:6px;background:#ff2442;color:#fff;font-size:6px;font-weight:bold;line-height:20px;text-align:center">小红书</div>
<div class="bm" style="left:595px">小红书 - 发现</div>
<div class="abs" style="left:701px;top:113px;width:20px;height:20px;border:1.5px solid #e87722;color:#222;font-size:14px;font-weight:bold;line-height:17px;text-align:center;font-family:'Noto Serif CJK SC',serif;font-style:italic">知</div>
<div class="bm" style="left:726px">中国知网</div>
<div class="abs" style="left:801px;top:113px;width:20px;height:20px;border-radius:50%;background:#1a6be0;color:#fff;font-size:12px;font-weight:bold;font-style:italic;line-height:19px;text-align:center">in</div>
<div class="bm" style="left:825px">登录 | Passport</div>
<svg style="left:945px;top:113px" width="20" height="20" viewBox="0 0 20 20"><circle cx="10" cy="10" r="9" fill="#5a5a63"/><path d="M4 6 Q8 4 9 7 Q10 10 7 11 Q5 13 6 16 M12 3 Q14 6 13 8 Q15 10 17 9 M11 13 Q13 12 15 14 Q13 17 11 16Z" fill="none" stroke="#f9f9fb" stroke-width="1.6"/></svg>
<div class="bm" style="left:970px">个人空间</div>
<svg style="left:1045px;top:113px" width="20" height="20" viewBox="0 0 20 20"><g fill="none" stroke="#4a4a55" stroke-width="1.4"><circle cx="10" cy="10" r="8.5"/><ellipse cx="10" cy="10" rx="3.8" ry="8.5"/><path d="M1.5 10 H18.5 M3 5.5 H17 M3 14.5 H17"/></g></svg>
<div class="bm" style="left:1070px">综合办公信息系统</div>
<svg style="left:1204px;top:113px" width="22" height="20" viewBox="0 0 22 20"><path d="M1 3 L8 6 V18 L1 14 Z" fill="#2f9e44"/><path d="M8 6 L21 2 V14 L8 18 Z" fill="#1c7ed6"/><path d="M1 3 L12 1 L21 2 L8 6Z" fill="#51cf66"/></svg>
<div class="bm" style="left:1230px">高等代数_中国大学M...</div>
<svg style="left:1405px;top:114px" width="18" height="18" viewBox="0 0 18 18"><path d="M2 1.5 L16 16.5" stroke="#7a3cf0" stroke-width="3.2"/><path d="M16 1.5 L2 16.5" stroke="#3b5bdb" stroke-width="3.2"/></svg>
<div class="bm" style="left:1430px">新界</div>
<div class="abs" style="left:1475px;top:113px;width:20px;height:20px;background:#14c1d7"></div><svg style="left:1478px;top:118px" width="14" height="10" viewBox="0 0 14 10"><path d="M3.5 9 A2.8 2.8 0 0 1 3.3 3.6 A3.8 3.8 0 0 1 10.6 3.4 A2.9 2.9 0 0 1 10.8 9 Z" fill="none" stroke="#fff" stroke-width="1.3"/></svg>
<div class="bm" style="left:1500px">云班课 - 活动列表</div>
<svg style="left:1731px;top:115px" width="17" height="15" viewBox="0 0 17 15"><path d="M1.5 1.5 L7.5 7.5 L1.5 13.5 M9 1.5 L15 7.5 L9 13.5" fill="none" stroke="#3a3a44" stroke-width="1.5"/></svg>
<svg style="left:1768px;top:112px" width="14" height="21" viewBox="0 0 14 21"><rect x="1" y="1" width="12" height="19" rx="2.2" fill="none" stroke="#3a3a44" stroke-width="1.6"/><path d="M5 17 H9" stroke="#3a3a44" stroke-width="1.4"/></svg>
<div class="bm" style="left:1785px">移动设备上的书签</div>
</body></html>
